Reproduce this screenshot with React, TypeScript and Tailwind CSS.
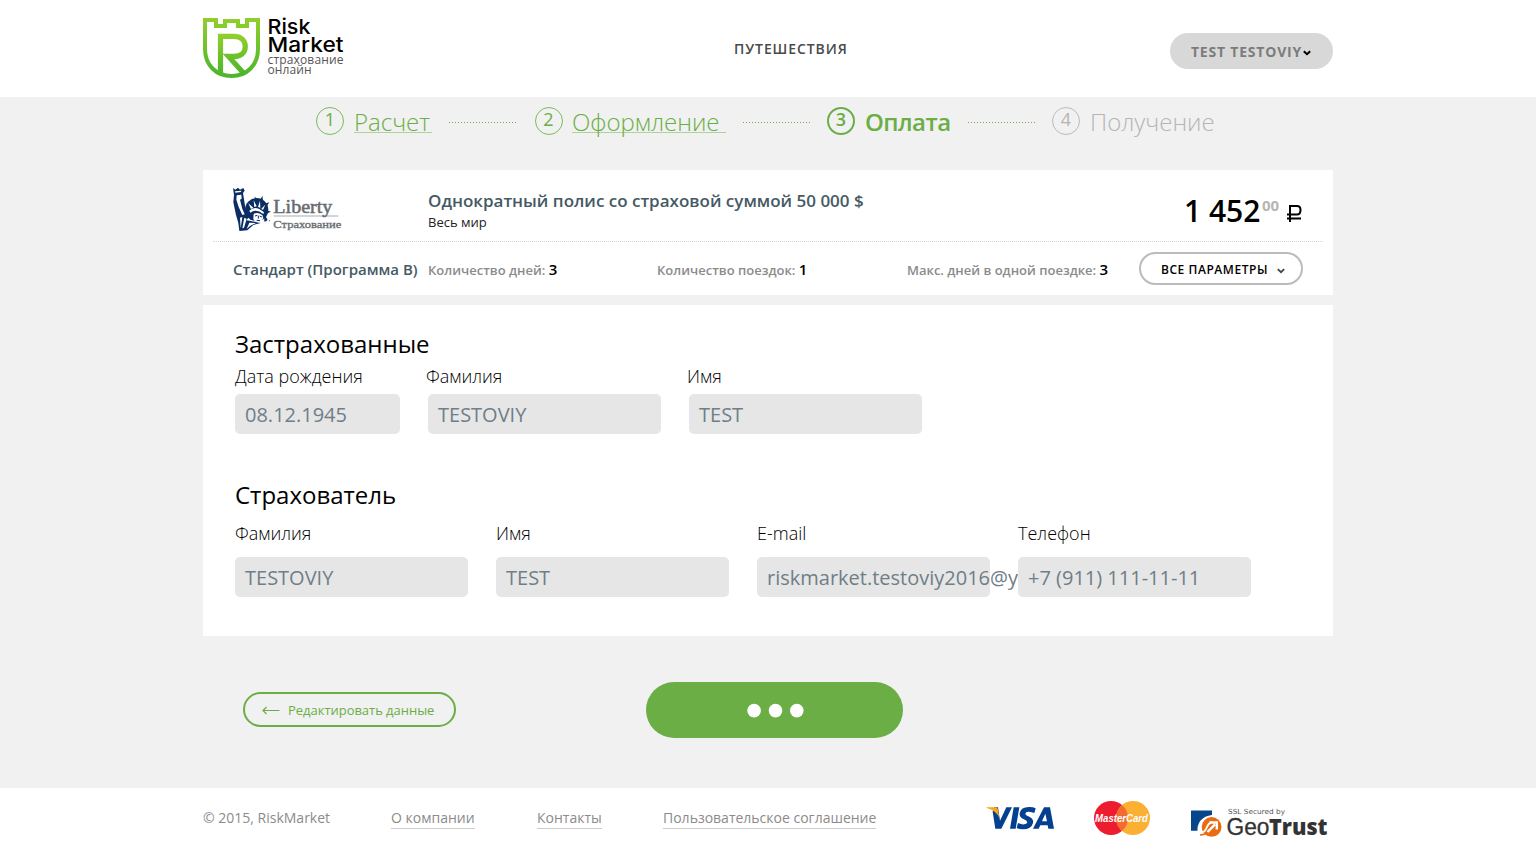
import React from "react";

const os = "font-['Open_Sans',sans-serif]";

function Chevron({ color, w }: { color: string; w: number }) {
  return (
    <svg width="8" height="6" viewBox="0 0 8 6" fill="none">
      <path d="M0.8 1.2 L4 4.2 L7.2 1.2" stroke={color} strokeWidth={w} />
    </svg>
  );
}

function RiskLogo() {
  return (
    <svg width="150" height="64" viewBox="0 0 150 64" className="block overflow-visible">
      <defs>
        <linearGradient id="shield" x1="0" y1="0" x2="0" y2="1">
          <stop offset="0" stopColor="#8fce2c" />
          <stop offset="1" stopColor="#4db52c" />
        </linearGradient>
      </defs>
      <g fill="none" stroke="url(#shield)" strokeWidth="4">
        <path d="M2 2 H13 V8 H22 V3 H35 V8 H44 V2 H55 V31 C55 47 44 58 28.5 58 C13 58 2 47 2 31 Z" />
        <path d="M17.5 56 V18.4 H31 C38 18.4 42.3 22.5 42.3 28.5 C42.3 34.5 38 38.4 31 38.4 H25.5 L40.5 55" strokeWidth="5.2" />
      </g>
      <g fontFamily="Inter, sans-serif" fontSize="20.5" fontWeight="500" fill="#000">
        <text x="64.5" y="16" textLength="43" lengthAdjust="spacingAndGlyphs">Risk</text>
        <text x="64.5" y="34" textLength="76" lengthAdjust="spacingAndGlyphs">Market</text>
      </g>
      <g fontFamily="Open Sans, sans-serif" fontSize="12" fill="#555">
        <text x="64.5" y="45.5" textLength="76">страхование</text>
        <text x="64.5" y="56" textLength="44">онлайн</text>
      </g>
    </svg>
  );
}

function LibertyLogo() {
  return (
    <svg width="112" height="48" viewBox="0 0 336 144" className="block overflow-visible">
      <g fill="#0b2d64">
        <circle cx="74" cy="68" r="35" />
        <path d="M3 3 L10 8 L18 2 L24 8 L34 3 L38 11 L33 18 L35 30 L40 62 L50 90 L44 100 L86 108 L64 114 L46 130 L22 132 L19 108 L12 84 L4 46 L6 24 Z" />
        <path d="M82 44 L91 26 L94 48 Z M92 52 L112 46 L101 63 Z M98 68 L117 74 L101 81 Z M70 44 L68 28 L78 42 Z M96 80 L106 97 Q108 102 97 104 Z" />
        <circle cx="112" cy="101" r="1.6" />
      </g>
      <g fill="#fff">
        <path d="M9 13 L28 11 L27 15 L10 17 Z M14 25 L28 23 L29 35 L24 38 L31 66 L38 82 L31 84 L20 60 L13 38 Z" />
        <path d="M24 92 L31 90 L26 124 Z M37 92 L44 96 L36 122 L31 124 Z M52 107 L72 108 L55 116 L44 126 Z" />
        <path d="M52 71 Q70 53 96 76 L94 81 Q72 64 55 77 Z" />
        <path d="M57 66 L49 49 L64 62 Z M67 60 L65 40 L74 58 Z M78 60 L84 41 L85 62 Z M88 65 L100 53 L93 69 Z" />
        <path d="M65 81 Q76 74 91 84 L94 93 L90 101 L82 106 Q68 106 64 96 Z" />
      </g>
      <path d="M69 87 L76 85 M83 87 L90 90 M79 86 L79 95 M74 100 L84 101 M57 83 Q53 91 57 99" stroke="#0b2d64" strokeWidth="3" fill="none" />
      <path d="M125 87 H319" stroke="#a8abad" strokeWidth="3" />
      <g fontFamily="Liberation Serif, serif" fill="#686d72" stroke="#686d72">
        <text x="124" y="77" fontSize="58" strokeWidth="1.6" textLength="177" lengthAdjust="spacingAndGlyphs">Liberty</text>
        <text x="124" y="122" fontSize="33" strokeWidth="1" textLength="204" lengthAdjust="spacingAndGlyphs">Страхование</text>
      </g>
    </svg>
  );
}

function Step({ n, kind }: { n: number; kind: "done" | "active" | "next" }) {
  const c =
    kind === "next"
      ? "border border-[#bbb] text-[#b5b5b5] font-normal"
      : kind === "active"
        ? "border-2 border-[#6aae45] text-[#6aae45] font-semibold"
        : "border border-[#7db95d] text-[#6aae45] font-normal";
  return (
    <span className={"flex h-7 w-7 shrink-0 items-center justify-center rounded-full text-[18px] leading-[24px] " + c}>
      <span className="-mt-1">{n}</span>
    </span>
  );
}

function Dots() {
  return (
    <svg width="68" height="1" className="mt-[15px] block shrink-0">
      <path d="M0 .5 H68" stroke="#6aae45" strokeDasharray="1 2" />
    </svg>
  );
}

function Field({ label, value, w, gap, shift }: { label: string; value: string; w: string; gap: string; shift?: boolean }) {
  return (
    <div className={"shrink-0 " + w}>
      <div className={"h-6 whitespace-nowrap text-[18px] leading-6 font-light text-black " + (shift ? "-ml-0.5" : "")}>{label}</div>
      <div className={"h-10 rounded-[5px] bg-[#e6e6e6] pl-2.5 text-[20px] leading-[41px] whitespace-nowrap text-[#6f7e87] " + gap}>{value}</div>
    </div>
  );
}

function Visa() {
  return (
    <svg width="70" height="26" viewBox="0 0 210 78" className="block">
      <g fill="#04408f">
        <path d="M24 7 H36 L42 47 L61 7 H78 L46 71 H28 L20 20 Z" />
        <path d="M83 7 H100 L89 71 H72 Z" />
        <path d="M149 10 L145 24 Q119 15 118 26 Q118 30 130 35 Q144 42 141 54 Q136 73 111 73 Q99 73 92 69 L96 54 Q107 59 115 58 Q124 57 124 52 Q124 47 114 43 Q99 37 101 25 Q105 5 131 6 Q142 6 149 10 Z" />
        <path fillRule="evenodd" d="M174 7 H192 L204 71 H187 L185 61 H163 L158 71 H141 Z M178 26 L168 49 H183 Z" />
      </g>
      <path d="M2 7 H28 Q35 7 36 14 L40 39 Q31 17 2 9 Z" fill="#f9a51a" />
    </svg>
  );
}

function MasterCard() {
  return (
    <svg width="58" height="36" viewBox="0 0 58 36" className="block overflow-visible">
      <circle cx="17" cy="17" r="17" fill="#ed1c2e" />
      <circle cx="39" cy="17" r="17" fill="#fbb034" />
      <path d="M28 4 A17 17 0 0 1 28 30 A17 17 0 0 1 28 4" fill="#f26b30" />
      <text x="1" y="21" fontFamily="Liberation Sans, sans-serif" fontSize="11" fontWeight="700" fontStyle="italic" fill="#fff" textLength="53" lengthAdjust="spacingAndGlyphs">MasterCard</text>
    </svg>
  );
}

function GeoTrust() {
  return (
    <svg width="140" height="34" viewBox="0 0 140 34" className="block overflow-visible">
      <path d="M0 4.5 H21 V9 C11 10 6 17 6.5 24.7 H0 Z" fill="#08468c" />
      <circle cx="20.6" cy="20.9" r="9.9" fill="#ea6c12" />
      <path d="M8 27.5 Q14 26.5 15.5 22 Q17 17.5 21 15.8" fill="none" stroke="#fff" strokeWidth="1.8" />
      <path d="M9 29 Q15 28.5 17 25.5" fill="none" stroke="#ea6c12" strokeWidth="1.6" />
      <path d="M16.5 26 L24 18.3 M18.5 16.5 H25.8 V23.6" fill="none" stroke="#fff" strokeWidth="2.4" />
      <text x="37" y="8.3" fontFamily="DejaVu Sans, sans-serif" fontSize="7" fill="#555" textLength="57" lengthAdjust="spacingAndGlyphs">SSL Secured by</text>
      <text x="35.5" y="29.3" fontFamily="Liberation Sans, sans-serif" fontSize="23.5" fill="#333" stroke="#333" strokeWidth=".3" textLength="43" lengthAdjust="spacingAndGlyphs">Geo</text>
      <text x="78" y="29.3" fontFamily="Open Sans, sans-serif" fontSize="23.5" fontWeight="800" fill="#333" textLength="58.5" lengthAdjust="spacingAndGlyphs">Trust</text>
    </svg>
  );
}

export default function App() {
  return (
    <div className={"h-[850px] w-[1536px] overflow-hidden bg-[#f1f1f1] text-black " + os}>
      <header className="h-[97px] bg-white">
        <div className="mx-auto flex w-[1130px] items-start">
          <div className="w-[531px] pt-[18px]"><RiskLogo /></div>
          <nav className="w-[436px] pt-[39px] text-[14px] leading-5 font-semibold tracking-[.9px] text-[#4a4a4a]">ПУТЕШЕСТВИЯ</nav>
          <button className="mt-[33px] flex h-9 w-[163px] items-center rounded-full bg-[#d8d8d8] pl-5 text-[14px] font-bold tracking-[.8px] whitespace-nowrap text-[#7c7c7c]">
            <span className="w-[113px]">TEST TESTOVIY</span>
            <span className="pt-[3px]"><Chevron color="#000" w={2} /></span>
          </button>
        </div>
      </header>

      <section className="mx-auto flex h-[73px] w-[1130px] pt-2.5 pl-[113px] text-[24px] leading-[21px] font-light text-[#6aae45]">
        <Step n={1} kind="done" />
        <div className="w-[105px] shrink-0 pt-1 pl-2.5"><span className="block h-[22px] w-[78px] border-b border-[#aed29b]">Расчет</span></div>
        <Dots />
        <div className="w-[17.5px] shrink-0" />
        <Step n={2} kind="done" />
        <div className="w-[180.5px] shrink-0 pt-1 pl-[9.5px]"><span className="block h-[22px] w-[154px] border-b border-[#aed29b]">Оформление</span></div>
        <Dots />
        <div className="w-4 shrink-0" />
        <Step n={3} kind="active" />
        <div className="w-[113px] shrink-0 pt-1 pl-2.5 font-semibold tracking-[-.55px]">Оплата</div>
        <Dots />
        <div className="w-4 shrink-0" />
        <Step n={4} kind="next" />
        <div className="pt-1 pl-2.5 text-[#b5b5b5]">Получение</div>
      </section>

      <main className="mx-auto w-[1130px]">
        <section className="h-[125px] bg-white px-2.5">
          <div className="flex h-[72px] border-b border-dotted border-[#d5d5d5] pl-[19px]">
            <div className="w-[196px] shrink-0 pt-[17px]"><LibertyLogo /></div>
            <div className="w-[756px] shrink-0 pt-5">
              <div className="text-[17px] leading-[22px] font-semibold text-[#455a64]">Однократный полис со страховой суммой 50 000 $</div>
              <div className="text-[13px] leading-5 text-[#222]">Весь мир</div>
            </div>
            <div className="flex shrink-0 pt-[21px]">
              <span className="w-[78px] shrink-0 text-[30px] leading-10 font-semibold whitespace-nowrap">1 452</span>
              <span className="w-[25px] shrink-0 pt-1 text-[15px] leading-5 font-bold text-[#b5b5b5]">00</span>
              <svg width="17" height="18" viewBox="0 0 17 18" className="mt-3.5 shrink-0" fill="none" stroke="#000" strokeWidth="2">
                <path d="M3 17 V1 H10 Q13.5 1 13.5 5 Q13.5 9.5 10 9.5 H0 M0 13.5 H14" />
              </svg>
            </div>
          </div>
          <div className="flex h-[53px] items-start pt-2.5 pl-5 text-[13px] leading-[34px] font-semibold whitespace-nowrap text-[#8b8b8b]">
            <div className="w-[195px] text-[15px] text-[#455a64]">Стандарт (Программа B)</div>
            <div className="w-[229px]">Количество дней: <b className="text-[15px] font-semibold text-black">3</b></div>
            <div className="w-[250px]">Количество поездок: <b className="text-[15px] font-semibold text-black">1</b></div>
            <div className="w-[232px]">Макс. дней в одной поездке: <b className="text-[15px] font-semibold text-black">3</b></div>
            <button className="flex h-[33px] w-[164px] items-center rounded-full border-2 border-[#bbb] pl-5 text-[12px] leading-5 font-semibold tracking-[.55px] text-black">
              <span className="w-[116px] shrink-0 pt-[3px] text-left">ВСЕ ПАРАМЕТРЫ</span><span className="pt-1"><Chevron color="#444" w={1.8} /></span>
            </button>
          </div>
        </section>

        <section className="mt-2.5 h-[331px] bg-white pt-[23px] pl-8">
          <h2 className="text-[24px] leading-8">Застрахованные</h2>
          <div className="mt-1 flex gap-7">
            <Field label="Дата рождения" value="08.12.1945" w="w-[165px]" gap="mt-[6px]" />
            <Field label="Фамилия" value="TESTOVIY" w="w-[233px]" gap="mt-[6px]" shift />
            <Field label="Имя" value="TEST" w="w-[233px]" gap="mt-[6px]" shift />
          </div>
          <h2 className="mt-[45px] text-[24px] leading-8">Страхователь</h2>
          <div className="mt-2.5 flex gap-7">
            <Field label="Фамилия" value="TESTOVIY" w="w-[233px]" gap="mt-3" />
            <Field label="Имя" value="TEST" w="w-[233px]" gap="mt-3" />
            <Field label="E-mail" value="riskmarket.testoviy2016@y" w="w-[233px]" gap="mt-3" />
            <Field label="Телефон" value="+7 (911) 111-11-11" w="w-[233px]" gap="mt-3" />
          </div>
        </section>

        <section className="flex h-[152px] items-start pl-10">
          <button className="mt-14 flex h-[35px] w-[213px] items-center rounded-full border-2 border-[#6aae45] pl-[17px] text-[13px] whitespace-nowrap text-[#6aae45]">
            <svg width="26" height="9" viewBox="0 0 26 9" className="mt-0.5" fill="none" stroke="#6aae45" strokeWidth="1.2"><path d="M17.5 4.5 H1 M4.5 1 L1 4.5 L4.5 8" /></svg>
            <span className="pt-[3px] tracking-[-.03px]">Редактировать данные</span>
          </button>
          <button className="mt-[46px] ml-[190px] flex h-14 w-[257px] items-center justify-center rounded-full bg-[#6aae45]">
            <svg width="58" height="16" viewBox="0 0 58 16" fill="#fff" className="block">
              <circle cx="8.1" cy="8.6" r="6.8" />
              <circle cx="29.5" cy="8.6" r="6.8" />
              <circle cx="50.8" cy="8.6" r="6.8" />
            </svg>
          </button>
        </section>
      </main>

      <footer className="h-[62px] bg-white">
        <div className="mx-auto flex w-[1130px] items-start text-[14px] leading-5 whitespace-nowrap text-[#8b8b8b]">
          <div className="w-[188px] pt-5">© 2015, RiskMarket</div>
          <div className="w-[146px] pt-5"><a className="inline-block h-[21px] border-b border-[#ccc]">О компании</a></div>
          <div className="w-[126px] pt-5"><a className="inline-block h-[21px] border-b border-[#ccc]">Контакты</a></div>
          <div className="w-[323px] pt-5"><a className="inline-block h-[21px] border-b border-[#ccc]">Пользовательское соглашение</a></div>
          <div className="w-[108px] pt-[17px]"><Visa /></div>
          <div className="w-[97px] pt-[13px]"><MasterCard /></div>
          <div className="pt-[18px]"><GeoTrust /></div>
        </div>
      </footer>
    </div>
  );
}
